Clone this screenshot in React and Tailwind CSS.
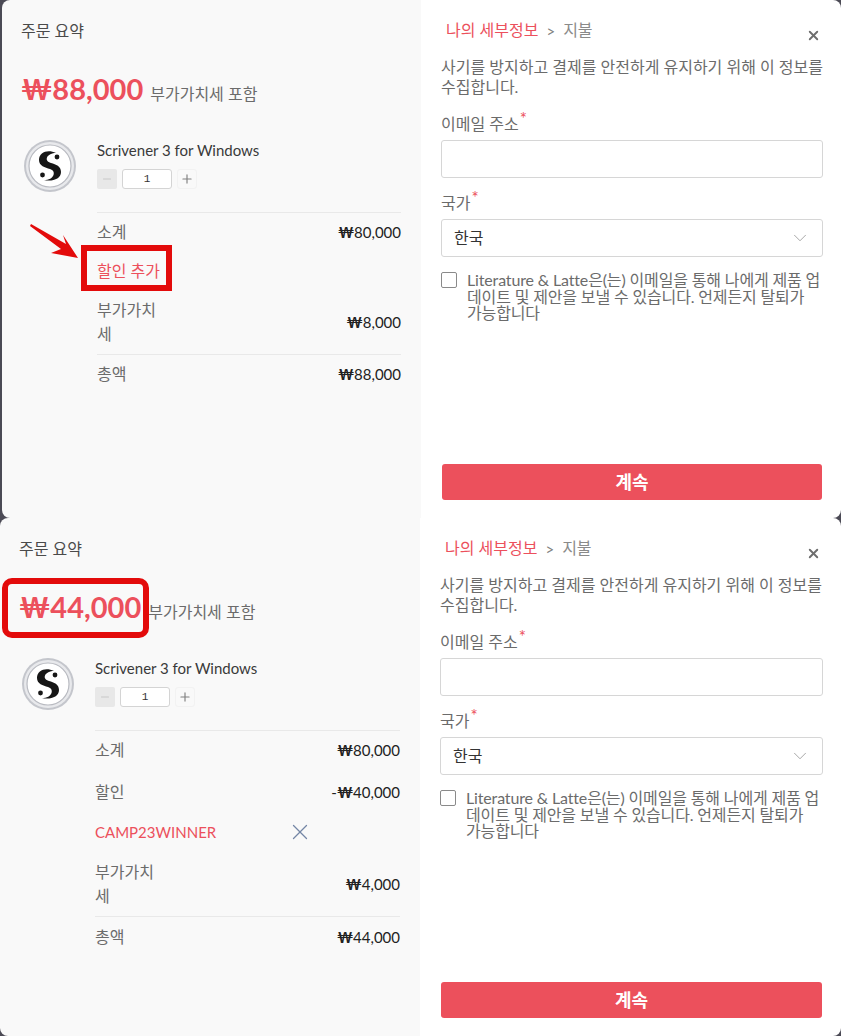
import React from "react";
import { ChevronDown, Minus, Plus, X } from "lucide-react";

const font = "font-['Lato','Noto_Sans_CJK_KR',sans-serif]";

const Logo = () => (
  <svg width="54" height="54" viewBox="0 0 54 54" className="shrink-0">
    <circle cx="27" cy="27" r="26" fill="#c4c6cc" />
    <circle cx="27" cy="27" r="24" fill="#e8e9ec" />
    <circle cx="27" cy="27" r="21" fill="#fff" stroke="#b8bac0" strokeWidth="1.2" />
    <path
      d="M33 14C25 10 16 13 16 21C16 27 22 28.5 27 30C30 31 31.5 33 30.5 36C29.5 39 26 41 21 41C29 43 38 40 38 33C38 27 33 25.5 28 24C24.5 23 23 21 24 18.5C25 16 29 14 33 14Z"
      fill="#161616"
    />
    <circle cx="34" cy="18" r="2.4" fill="#161616" />
    <circle cx="19.5" cy="36" r="2.4" fill="#161616" />
  </svg>
);

const Money = ({ sign = "", value }) => (
  <span className="text-[15px] leading-6 text-[#222]">
    {sign}
    <span className="font-bold">₩</span>
    {value}
  </span>
);

const Row = ({ label, sign, value, className = "" }) => (
  <div className={`flex items-center justify-between ${className}`}>
    <span className="text-[16px] leading-6 text-[#6b6b6b]">{label}</span>
    <Money sign={sign} value={value} />
  </div>
);

const VatRow = ({ value }) => (
  <div className="flex items-center justify-between">
    <span className="w-[66px] text-[16px] leading-6 text-[#6b6b6b]">부가가치세</span>
    <Money value={value} />
  </div>
);

const Summary = ({ price, width, children }) => (
  <div className={`flex h-full shrink-0 flex-col bg-[#f9f9f9] pr-5 pl-[19px] ${width}`}>
    <h2 className="mt-[21px] text-[16px] leading-5 text-[#4a4a4a]">주문 요약</h2>
    <div className="mt-[29px] flex h-[38px] items-center">
      <span className="text-[29px] leading-[38px] font-bold text-[#ec505c]">{price}</span>
      <span className="mt-[10px] ml-[7px] text-[16px] text-[#6b6b6b]">부가가치세 포함</span>
    </div>
    <div className="mt-[32px] flex items-start">
      <div className="mt-[-1px] ml-[2px]">
        <Logo />
      </div>
      <div className="ml-[20px] flex-1">
        <p className="text-[15px] leading-5 text-[#3a3a3a]">Scrivener 3 for Windows</p>
        <div className="mt-[9px] flex items-center">
          <button className="flex h-5 w-5 items-center justify-center rounded-[2px] bg-[#e8e8e8] text-[#c8c8c8]">
            <Minus size={12} />
          </button>
          <div className="ml-[5px] flex h-5 w-[50px] items-center justify-center rounded-[3px] border border-[#d4d4d4] bg-white font-['Liberation_Mono',monospace] text-[11px] text-[#333]">
            1
          </div>
          <button className="ml-[5px] flex h-5 w-5 items-center justify-center rounded-[3px] border border-[#f2f2f2] text-[#808080]">
            <Plus size={14} />
          </button>
        </div>
      </div>
    </div>
    <div className="mt-[19px] ml-[76px] border-t border-[#e9e9e9]">{children}</div>
  </div>
);

const Details = () => (
  <div className="relative flex h-full flex-1 flex-col bg-white pr-[18px] pl-5">
    <div className="mt-[20px] ml-[5px] flex h-5 items-center text-[16px] leading-5">
      <span className="text-[#ec505c]">나의 세부정보</span>
      <span className="mx-[8px] mt-[2px] text-[15px] text-[#808080]">&gt;</span>
      <span className="text-[#8a8a8a]">지불</span>
    </div>
    <button className="absolute top-[28px] right-[20px] text-[#6e6e6e]">
      <X size={15} strokeWidth={3} />
    </button>
    <p className="mt-[17px] text-[16px] leading-5 text-[#6b6b6b]">
      사기를 방지하고 결제를 안전하게 유지하기 위해 이 정보를 수집합니다.
    </p>
    <label className="mt-[17px] text-[16px] leading-5 text-[#6b6b6b]">
      이메일 주소<sup className="top-[-0.3em] ml-[1px] text-[17px] text-[#ec505c]">*</sup>
    </label>
    <input className="mt-[6px] h-[38px] shrink-0 rounded-[3px] border border-[#d6d6d6] bg-white" />
    <label className="mt-[15px] text-[16px] leading-5 text-[#6b6b6b]">
      국가<sup className="top-[-0.3em] ml-[1px] text-[17px] text-[#ec505c]">*</sup>
    </label>
    <div className="mt-[6px] flex h-[38px] shrink-0 items-center justify-between rounded-[3px] border border-[#d6d6d6] bg-white pr-[11px] pl-[12px]">
      <span className="text-[16px] text-[#333]">한국</span>
      <ChevronDown size={22} strokeWidth={0.7} className="text-[#777]" />
    </div>
    <div className="mt-[15px] flex items-start">
      <span className="h-4 w-4 shrink-0 rounded-[2px] border border-[#8a8a8a] bg-white" />
      <p className="mr-[2px] ml-[10px] text-[16px] leading-[16.5px] tracking-[-0.15px] text-[#6b6b6b]">
        Literature &amp; Latte은(는) 이메일을 통해 나에게 제품 업데이트 및 제안을 보낼 수 있습니다. 언제든지 탈퇴가 가능합니다
      </p>
    </div>
    <button className="mx-[1px] mt-auto mb-[18px] h-9 rounded-[3px] bg-[#ec505c] text-[18px] font-bold text-white">
      계속
    </button>
  </div>
);

export default function App() {
  return (
    <div className={`relative h-[1036px] w-[841px] overflow-hidden bg-[#4b4a55] ${font}`}>
      {/* first shot: before the coupon */}
      <div className="ml-[2px] flex h-[518px] overflow-hidden rounded-lg">
        <Summary price="₩88,000" width="w-[419px]">
          <Row label="소계" value="80,000" className="mt-[7px]" />
          <p className="mt-[15px] text-[16px] leading-6 text-[#ec505c]">할인 추가</p>
          <div className="mt-[15px]">
            <VatRow value="8,000" />
          </div>
          <div className="mt-2 border-t border-[#e9e9e9] pt-[7px]">
            <Row label="총액" value="88,000" />
          </div>
        </Summary>
        <Details />
      </div>

      {/* second shot: coupon applied */}
      <div className="flex h-[518px] overflow-hidden rounded-lg">
        <Summary price="₩44,000" width="w-[420px]">
          <Row label="소계" value="80,000" className="mt-[7px]" />
          <Row label="할인" sign="-" value="40,000" className="mt-[18px]" />
          <div className="mt-4 flex h-6 items-center">
            <span className="w-[192px] text-[15px] text-[#ec505c]">CAMP23WINNER</span>
            <X size={26} strokeWidth={1.2} className="shrink-0 text-[#7486a6]" />
          </div>
          <div className="mt-4">
            <VatRow value="4,000" />
          </div>
          <div className="mt-2 border-t border-[#e9e9e9] pt-2">
            <Row label="총액" value="44,000" />
          </div>
        </Summary>
        <Details />
      </div>

      {/* red annotations drawn over the screenshots */}
      <div className="absolute top-[245px] left-[81px] h-[46px] w-[91px] border-[6px] border-[#e30b0b]" />
      <div className="absolute top-[578px] left-[2px] h-[60px] w-[147px] rounded-[10px] border-[6px] border-[#e30b0b]" />
      <svg className="absolute top-[222px] left-[28px]" width="52" height="38" viewBox="0 0 52 38">
        <polygon points="2,4 3,2 38,22 35,13 50,36 23,31 33,27" fill="#e30b0b" />
      </svg>
    </div>
  );
}
